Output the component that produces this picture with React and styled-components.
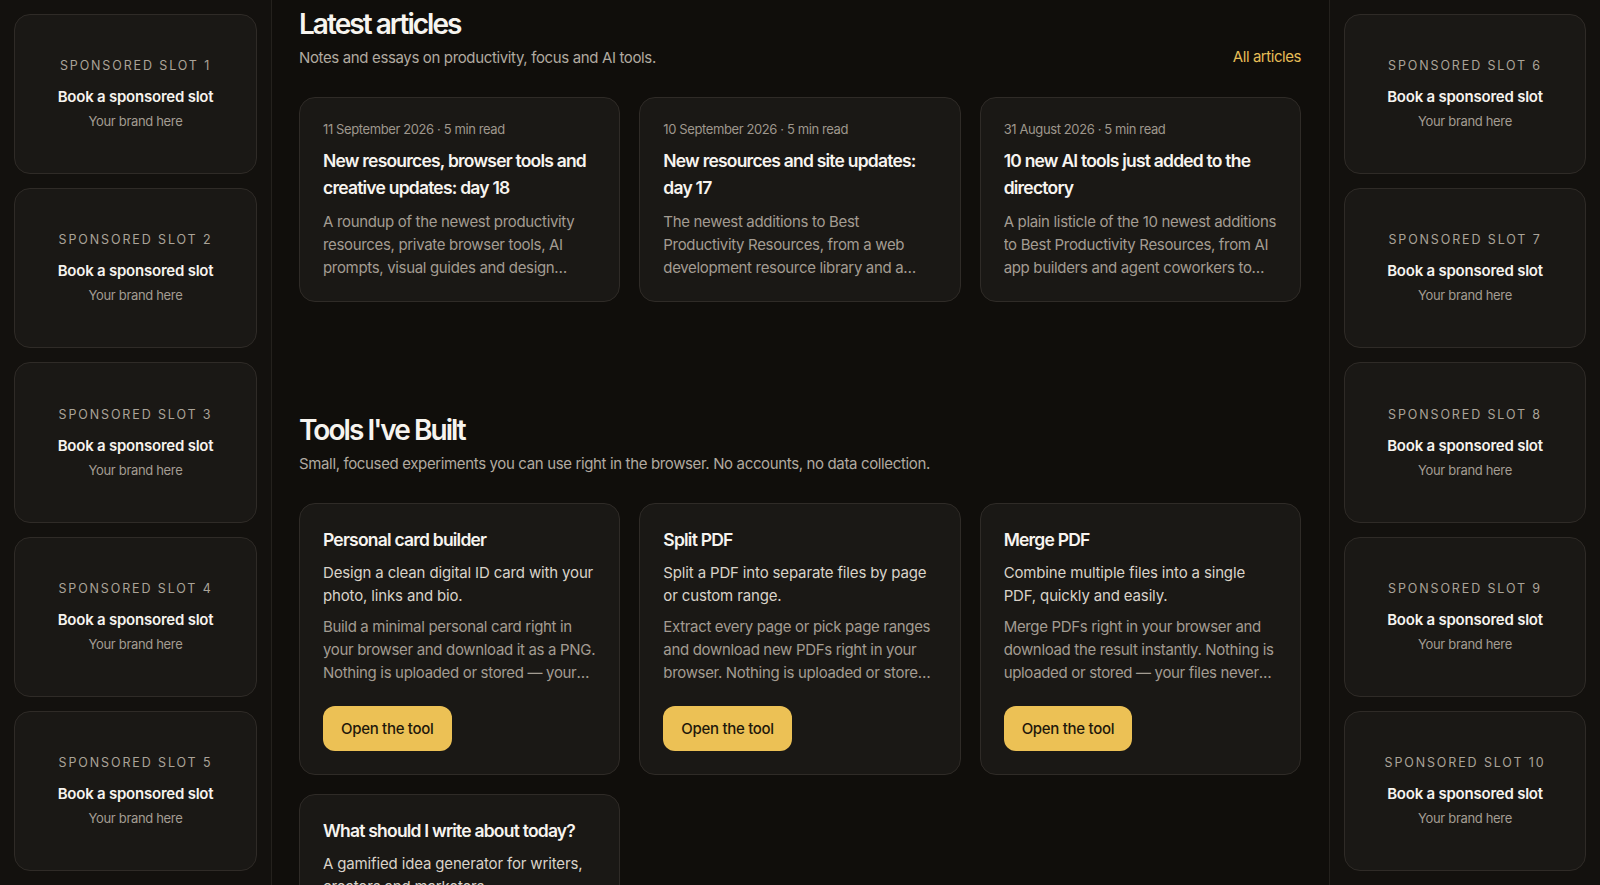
import React from "react";
import styled, { createGlobalStyle } from "styled-components";

const GlobalStyle = createGlobalStyle`
  *, *::before, *::after { box-sizing: border-box; }
  html, body { margin: 0; padding: 0; height: 100%; }
  body {
    background: #100e0b;
    color: #f4f1ec;
    font-family: Inter, "Noto Sans", "Liberation Sans", sans-serif;
    letter-spacing: -0.02em;
    -webkit-font-smoothing: antialiased;
    overflow: hidden;
  }
`;

const Shell = styled.div`
  display: grid;
  grid-template-columns: 272px 1fr 271px;
  height: 100vh;
  background: #100e0b;
`;

const Rail = styled.aside`
  display: flex;
  flex-direction: column;
  gap: 14px;
  padding: 14px;
  height: 100vh;
  background: #13110e;
  ${({ $side }) =>
    $side === "left"
      ? "border-right: 1px solid #24211d;"
      : "border-left: 1px solid #24211d;"}
`;

const SlotCard = styled.a`
  flex: 1;
  display: flex;
  flex-direction: column;
  align-items: center;
  justify-content: center;
  text-align: center;
  background: #1a1815;
  border: 1px solid #2f2b27;
  border-radius: 16px;
  text-decoration: none;
`;

const SlotLabel = styled.div`
  font-size: 12.5px;
  line-height: 16px;
  letter-spacing: 0.15em;
  text-transform: uppercase;
  color: #aaa398;
`;

const SlotTitle = styled.div`
  margin-top: 13px;
  font-size: 15px;
  line-height: 20px;
  font-weight: 600;
  letter-spacing: -0.015em;
  color: #f6f3ee;
`;

const SlotNote = styled.div`
  margin-top: 5px;
  font-size: 13px;
  line-height: 18px;
  letter-spacing: -0.025em;
  color: #a39c92;
`;

const Main = styled.main`
  height: 100vh;
  overflow-y: auto;
  scrollbar-width: none;
  padding: 7px 28px 40px 27px;
  &::-webkit-scrollbar { display: none; }
`;

const Section = styled.section`
  & + & { margin-top: 111px; }
`;

const SectionHead = styled.header`
  display: flex;
  align-items: flex-end;
  justify-content: space-between;
  margin-bottom: 28px;
`;

const Heading = styled.h2`
  margin: 0;
  font-size: 28px;
  line-height: 34px;
  font-weight: 600;
  letter-spacing: -0.07em;
  color: #f7f4ef;
`;

const Lede = styled.p`
  margin: 6px 0 0;
  font-size: 15px;
  line-height: 22px;
  letter-spacing: -0.024em;
  color: #b1aaa0;
`;

const MoreLink = styled.a`
  font-size: 15px;
  line-height: 22px;
  letter-spacing: -0.03em;
  color: #e6bd57;
  text-decoration: none;
  margin-bottom: 1px;
`;

const CardGrid = styled.div`
  display: grid;
  grid-template-columns: repeat(3, 1fr);
  gap: 19px;
`;

const Card = styled.article`
  background: #1a1815;
  border: 1px solid #2f2b27;
  border-radius: 16px;
  padding: ${({ $tight }) => ($tight ? "22px 23px 22px" : "24px 23px 23px")};
`;

const Meta = styled.div`
  font-size: 13px;
  line-height: 18px;
  color: #9e978d;
  letter-spacing: -0.03em;
`;

const CardTitle = styled.h3`
  margin: ${({ $first }) => ($first ? "0" : "9px 0 0")};
  font-size: 17.5px;
  line-height: ${({ $first }) => ($first ? "24px" : "27px")};
  font-weight: 600;
  letter-spacing: -0.045em;
  color: #f7f4ef;
`;

const Clamp = styled.p`
  margin: ${({ $gap }) => $gap};
  font-size: 15px;
  line-height: ${({ $lh }) => $lh || "23px"};
  letter-spacing: ${({ $tone }) => ($tone === "bright" ? "-0.01em" : "-0.022em")};
  color: ${({ $tone }) => ($tone === "bright" ? "#d9d3c9" : "#a39c92")};
  display: -webkit-box;
  -webkit-box-orient: vertical;
  -webkit-line-clamp: ${({ $lines }) => $lines};
  overflow: hidden;
`;

const ToolButton = styled.a`
  display: inline-flex;
  align-items: center;
  justify-content: center;
  margin-top: 22px;
  height: 45px;
  padding: 0 18px;
  border-radius: 12px;
  background: #ecc155;
  color: #1f180b;
  font-size: 15px;
  font-weight: 500;
  letter-spacing: -0.02em;
  text-decoration: none;
`;

const articles = [
  {
    meta: "11 September 2026 · 5 min read",
    title: "New resources, browser tools and creative updates: day 18",
    text: "A roundup of the newest productivity resources, private browser tools, AI prompts, visual guides and design inspiration added to the directory today.",
  },
  {
    meta: "10 September 2026 · 5 min read",
    title: "New resources and site updates: day 17",
    text: "The newest additions to Best Productivity Resources, from a web development resource library and a handful of new focus and writing tools.",
  },
  {
    meta: "31 August 2026 · 5 min read",
    title: "10 new AI tools just added to the directory",
    text: "A plain listicle of the 10 newest additions to Best Productivity Resources, from AI app builders and agent coworkers to note takers and research assistants.",
  },
];

const tools = [
  {
    title: "Personal card builder",
    lead: "Design a clean digital ID card with your photo, links and bio.",
    text: "Build a minimal personal card right in your browser and download it as a PNG. Nothing is uploaded or stored — your details stay on your device.",
  },
  {
    title: "Split PDF",
    lead: "Split a PDF into separate files by page or custom range.",
    text: "Extract every page or pick page ranges and download new PDFs right in your browser. Nothing is uploaded or stored anywhere.",
  },
  {
    title: "Merge PDF",
    lead: "Combine multiple files into a single PDF, quickly and easily.",
    text: "Merge PDFs right in your browser and download the result instantly. Nothing is uploaded or stored — your files never leave your device.",
  },
  {
    title: "What should I write about today?",
    lead: "A gamified idea generator for writers, creators and marketers.",
    text: "Spin for a fresh prompt, save the ones you like and beat the blank page in seconds.",
  },
];

function SponsorRail({ side, from }) {
  return (
    <Rail $side={side}>
      {Array.from({ length: 5 }, (_, i) => (
        <SlotCard key={i} href="#">
          <SlotLabel>Sponsored slot {from + i}</SlotLabel>
          <SlotTitle>Book a sponsored slot</SlotTitle>
          <SlotNote>Your brand here</SlotNote>
        </SlotCard>
      ))}
    </Rail>
  );
}

export default function App() {
  return (
    <>
      <GlobalStyle />
      <Shell>
        <SponsorRail side="left" from={1} />
        <Main>
          <Section>
            <SectionHead>
              <div>
                <Heading>Latest articles</Heading>
                <Lede>Notes and essays on productivity, focus and AI tools.</Lede>
              </div>
              <MoreLink href="#">All articles</MoreLink>
            </SectionHead>
            <CardGrid>
              {articles.map((a) => (
                <Card key={a.title} $tight>
                  <Meta>{a.meta}</Meta>
                  <CardTitle>{a.title}</CardTitle>
                  <Clamp $lines={3} $gap="9px 0 0">{a.text}</Clamp>
                </Card>
              ))}
            </CardGrid>
          </Section>

          <Section>
            <SectionHead>
              <div>
                <Heading>Tools I've Built</Heading>
                <Lede>
                  Small, focused experiments you can use right in the browser. No
                  accounts, no data collection.
                </Lede>
              </div>
            </SectionHead>
            <CardGrid>
              {tools.map((t) => (
                <Card key={t.title}>
                  <CardTitle $first>{t.title}</CardTitle>
                  <Clamp $lines={2} $gap="10px 0 0" $lh="22.5px" $tone="bright">
                    {t.lead}
                  </Clamp>
                  <Clamp $lines={3} $gap="8px 0 0">{t.text}</Clamp>
                  <ToolButton href="#">Open the tool</ToolButton>
                </Card>
              ))}
            </CardGrid>
          </Section>
        </Main>
        <SponsorRail side="right" from={6} />
      </Shell>
    </>
  );
}
